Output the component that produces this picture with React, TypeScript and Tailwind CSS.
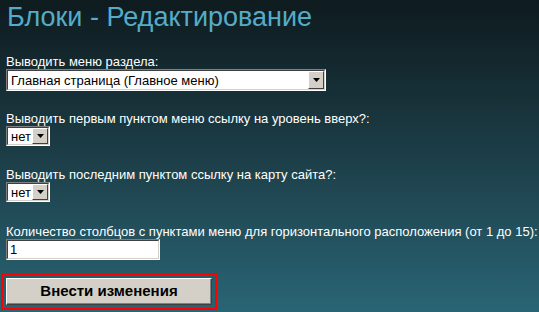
import React from "react";

const Arrow = () => (
  <svg width="7" height="4" viewBox="0 0 7 4" className="block">
    <path d="M0 0h7L3.5 4z" fill="#000" />
  </svg>
);

// old windows style dropdown
const Select = ({ value, size }: { value: string; size: string }) => {
  return (
    <div
      className={`${size} flex border border-t-[#808080] border-l-[#808080] border-r-white border-b-white`}
    >
      <div className="flex flex-1 border border-t-[#404040] border-l-[#404040] border-r-[#d4d0c8] border-b-[#d4d0c8] bg-white">
        <div className="flex-1 flex items-center pl-[3px] text-[13px] leading-[15px] text-black whitespace-nowrap overflow-hidden">
          {value}
        </div>
        <div className="w-[16px] flex items-center justify-center bg-[#d4d0c8] border border-t-white border-l-white border-r-[#404040] border-b-[#404040]">
          <Arrow />
        </div>
      </div>
    </div>
  );
};

const Field = ({
  label,
  children,
  className,
}: {
  label: string;
  children: React.ReactNode;
  className?: string;
}) => (
  <div className={`flex flex-col ${className ?? ""}`}>
    <label className="text-[13px] leading-[13px] mb-[1px] whitespace-nowrap">
      {label}
    </label>
    {children}
  </div>
);

export default function App() {
  return (
    <div className="w-full h-[312px] overflow-hidden bg-gradient-to-b from-[#0e1b1f] to-[#2a6575] font-['Liberation_Sans',Arial,sans-serif] text-white px-[6px]">
      <h1 className="text-[27px] leading-[30px] pt-[2px] pl-[1px] text-[#55acc9]">
        Блоки - Редактирование
      </h1>
      <div className="flex flex-col mt-[23px]">
        <Field label="Выводить меню раздела:">
          <Select value="Главная страница (Главное меню)" size="w-[320px] h-[22px]" />
        </Field>
        <Field label="Выводить первым пунктом меню ссылку на уровень вверх?:" className="mt-[21px]">
          <Select value="нет" size="w-[44px] h-[20px]" />
        </Field>
        <Field label="Выводить последним пунктом ссылку на карту сайта?:" className="mt-[22px]">
          <Select value="нет" size="w-[44px] h-[20px]" />
        </Field>
        <Field label="Количество столбцов с пунктами меню для горизонтального расположения (от 1 до 15):" className="mt-[23px]">
          <div className="w-[154px] h-[21px] border border-t-[#808080] border-l-[#808080] border-r-white border-b-white">
            <div className="h-full border border-t-[#404040] border-l-[#404040] border-r-[#d4d0c8] border-b-[#d4d0c8] bg-white text-black text-[13px] leading-[17px] pl-[2px]">
              1
            </div>
          </div>
        </Field>
      </div>
      <div className="-ml-[5px] mt-[13px] w-[216px] h-[37px] border-2 border-[#ff0000] p-[3px]">
        <button className="w-full h-full bg-[#d4d0c8] text-black font-bold text-[15px] border border-t-white border-l-white border-r-[#404040] border-b-[#404040] shadow-[inset_-1px_-1px_0_#808080]">
          Внести изменения
        </button>
      </div>
    </div>
  );
}
